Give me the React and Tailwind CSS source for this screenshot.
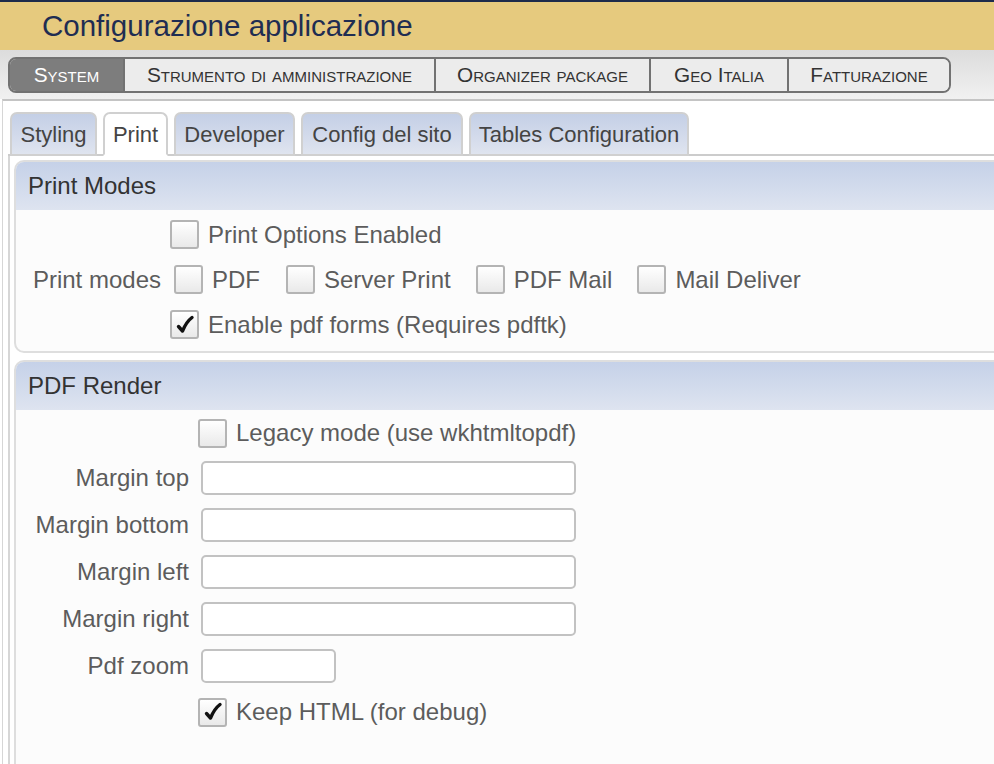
import React from "react";

const navItems = [
  {label: "System", w: "w-[113px]", active: true},
  {label: "Strumento di amministrazione", w: "w-[311px]"},
  {label: "Organizer package", w: "w-[215px]"},
  {label: "Geo Italia", w: "w-[138px]"},
  {label: "Fatturazione", w: "w-[162px]"},
];

const tabs = [
  {label: "Styling", w: "w-[87px]"},
  {label: "Print", w: "w-[65px]", active: true},
  {label: "Developer", w: "w-[121px]"},
  {label: "Config del sito", w: "w-[162px]"},
  {label: "Tables Configuration", w: "w-[220px]"},
];

const Check = ({checked, className = ""}) => (
  <span
    className={`flex h-[29px] w-[29px] shrink-0 items-center justify-center rounded-[3px] border-2 border-[#b4b4b4] bg-gradient-to-b from-white to-[#e9e9e9] ${className}`}
  >
    {checked && (
      <svg width="22" height="22" viewBox="0 0 22 22">
        <path
          d="M4.5 12.5 L8.5 17 C11 11 14 6.5 18 3.5"
          fill="none"
          stroke="#111"
          strokeWidth="3.4"
          strokeLinecap="round"
          strokeLinejoin="round"
        />
      </svg>
    )}
  </span>
);

const SectionHeader = ({title}) => (
  <div className="flex h-[48px] items-center rounded-t-[8px] bg-gradient-to-b from-[#c5d1e8] to-[#dee4f0] pl-[12px] text-[24px] text-[#333]">
    {title}
  </div>
);

const InputRow = ({label, w = "w-[375px]"}) => (
  <div className="flex h-[47px] items-center">
    <div className="w-[173px] text-right">{label}</div>
    <input
      type="text"
      className={`ml-[12px] h-[34px] ${w} rounded-[5px] border-2 border-[#c2c2c2] bg-white outline-none`}
    />
  </div>
);

const App = () => {
  return (
    <div className="h-[764px] w-[994px] overflow-hidden bg-white font-['Liberation_Sans',Arial,sans-serif]">
      <div className="h-[2px] bg-[#1d2b4b]" />
      <div className="flex h-[48px] items-center bg-[#e6ca7e] pl-[42px] text-[29.5px] text-[#1f2d52]">
        Configurazione applicazione
      </div>
      <div className="h-[49px] bg-gradient-to-b from-[#dcdcdc] to-[#f1f1f1] pl-[8px] pt-[7px]">
        <div className="flex h-[36px] w-fit overflow-hidden rounded-[8px] border-2 border-[#727272] text-[20.8px] [font-variant:small-caps]">
          {navItems.map((n, i) => (
            <div
              key={n.label}
              className={`flex items-center justify-center ${n.w} ${i > 0 ? "border-l-2 border-[#727272]" : ""} ${
                n.active ? "bg-[#7d7d7d] text-white" : "bg-[#ececec] text-[#333]"
              }`}
            >
              {n.label}
            </div>
          ))}
        </div>
      </div>
      <div className="ml-[2px] h-full border-l border-t-2 border-[#c4c4c4] border-l-[#d6d6d6] pl-[5px] pt-[11px]">
        <div className="flex items-end gap-[6px] border-b-2 border-[#cccccc] pl-[2px]">
          {tabs.map((t) => (
            <div
              key={t.label}
              className={`relative -mb-[2px] flex h-[44px] items-center justify-center rounded-t-[7px] border-2 border-[#d0d0d0] text-[22px] text-[#444] ${t.w} ${
                t.active ? "border-b-white bg-white" : "bg-gradient-to-b from-[#c4cfe6] to-[#dfe4ef]"
              }`}
            >
              {t.label}
            </div>
          ))}
        </div>
        <div className="h-full border-l-2 border-[#d6d6d6] pl-[4px] pt-[4px] text-[24px] text-[#5c5c5c]">
          <div className="w-[1000px] rounded-[10px] border-2 border-[#dedede] bg-[#fcfcfc]">
            <SectionHeader title="Print Modes" />
            <div className="pb-[4px] pt-[2px]">
              <div className="flex h-[45px] items-center">
                <div className="w-[145px]" />
                <Check className="ml-[9px]" />
                <span className="ml-[9px]">Print Options Enabled</span>
              </div>
              <div className="flex h-[45px] items-center">
                <div className="w-[145px] text-right">Print modes</div>
                <Check className="ml-[13px]" />
                <span className="ml-[9px]">PDF</span>
                <Check className="ml-[26px]" />
                <span className="ml-[9px]">Server Print</span>
                <Check className="ml-[25px]" />
                <span className="ml-[9px]">PDF Mail</span>
                <Check className="ml-[25px]" />
                <span className="ml-[9px]">Mail Deliver</span>
              </div>
              <div className="flex h-[45px] items-center">
                <div className="w-[145px]" />
                <Check checked className="ml-[9px]" />
                <span className="ml-[9px]">Enable pdf forms (Requires pdftk)</span>
              </div>
            </div>
          </div>
          <div className="mt-[7px] h-[420px] w-[1000px] rounded-[10px] border-2 border-[#dedede] bg-[#fcfcfc]">
            <SectionHeader title="PDF Render" />
            <div className="pt-[2px]">
              <div className="flex h-[42px] items-center">
                <div className="w-[173px]" />
                <Check className="ml-[9px]" />
                <span className="ml-[9px]">Legacy mode (use wkhtmltopdf)</span>
              </div>
              <InputRow label="Margin top" />
              <InputRow label="Margin bottom" />
              <InputRow label="Margin left" />
              <InputRow label="Margin right" />
              <InputRow label="Pdf zoom" w="w-[135px]" />
              <div className="flex h-[46px] items-center">
                <div className="w-[173px]" />
                <Check checked className="ml-[9px]" />
                <span className="ml-[9px]">Keep HTML (for debug)</span>
              </div>
            </div>
          </div>
        </div>
      </div>
    </div>
  );
};

export default App;
